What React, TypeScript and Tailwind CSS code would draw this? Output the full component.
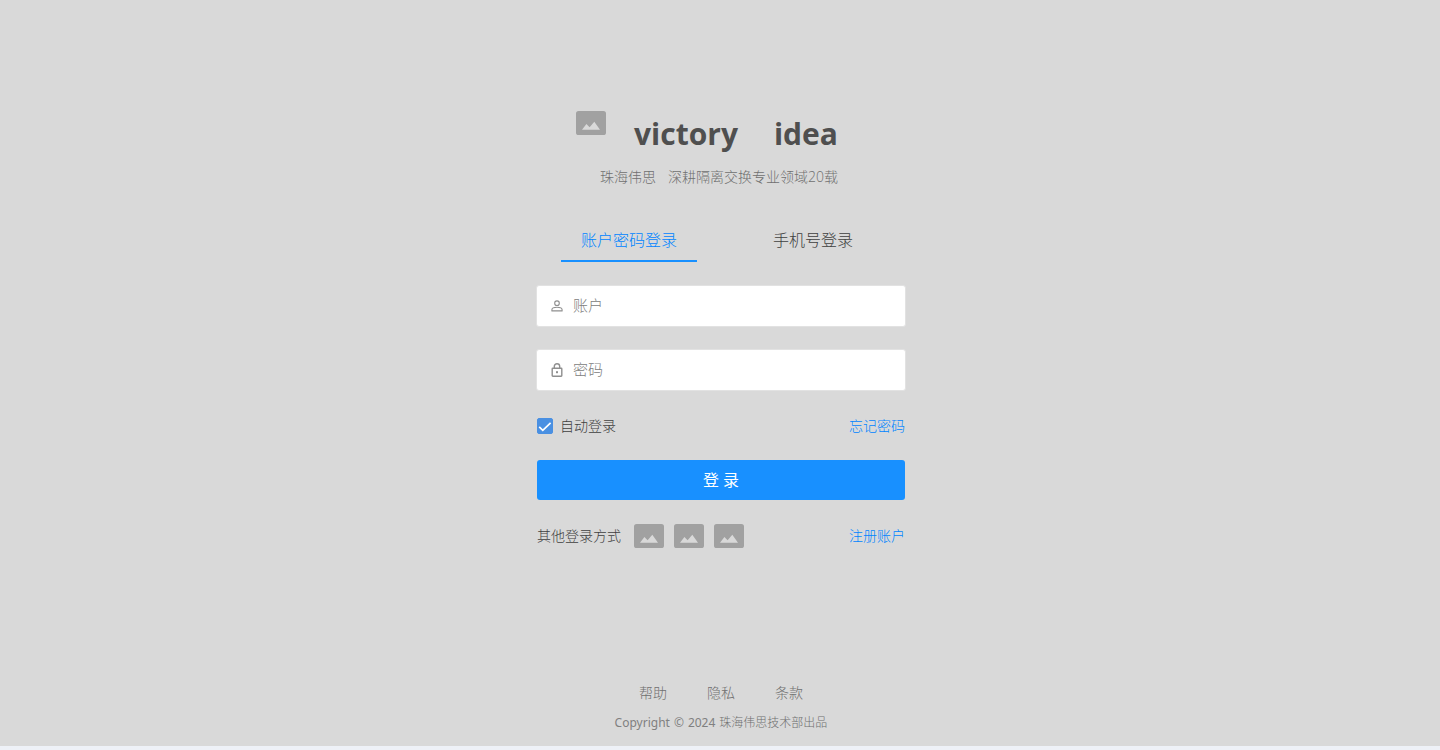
import { useState } from 'react';

function ImageIcon() {
  return (
    <svg width="30" height="24" viewBox="0 0 30 24" aria-hidden="true" className="block shrink-0">
      <rect width="30" height="24" rx="2.6" fill="#a1a1a1" />
      <path d="M6 18.7L10.4 12.9L13.6 16.2L18.3 10.8L24 18.7Z" fill="#d9d9d9" />
    </svg>
  );
}

function UserIcon() {
  return (
    <svg width="12" height="12" viewBox="0 0 12 12" fill="none" stroke="#8f8f8f" strokeWidth="1.1" aria-hidden="true">
      <circle cx="6" cy="3.2" r="2.3" />
      <path d="M0.9 10.9V9.8C0.9 8.3 3.4 7.3 6 7.3S11.1 8.3 11.1 9.8V10.9Z" strokeLinejoin="round" />
    </svg>
  );
}

function LockIcon() {
  return (
    <svg width="12" height="14" viewBox="0 0 12 14" fill="none" stroke="#8f8f8f" strokeWidth="1.4" aria-hidden="true">
      <rect x="1.2" y="5.2" width="9.6" height="8" rx="0.6" />
      <path d="M3.3 5.2V3.4C3.3 1.7 4.4 0.7 6 0.7S8.7 1.7 8.7 3.4V5.2" />
      <rect x="5" y="8.2" width="2" height="2" fill="#8f8f8f" stroke="none" />
    </svg>
  );
}

export default function App() {
  const [tab, setTab] = useState('account');
  const tabs = [
    { id: 'account', label: '账户密码登录' },
    { id: 'phone', label: '手机号登录' },
  ];

  return (
    <div className="flex min-h-screen flex-col bg-[#eef1f7] pb-1 font-['Open_Sans','Noto_Sans_CJK_SC',sans-serif] text-sm font-light text-[#404040]">
      <main className="flex flex-1 flex-col items-center bg-[#d9d9d9] pl-0.5">
        <header className="pt-[111px]">
          <div className="flex h-12 items-start pr-7">
            <ImageIcon />
            <h1 className="ml-7 flex gap-9 text-[30px] leading-[46px] font-bold text-[#4f4f4f]">
              <span>victory</span>
              <span>idea</span>
            </h1>
          </div>
          <p className="mt-2 flex gap-3 pl-6 leading-5 text-[#707070]">
            <span>珠海伟思</span>
            <span>深耕隔离交换专业领域20载</span>
          </p>
        </header>

        <form className="mt-8 w-full max-w-[370px]" onSubmit={(e) => e.preventDefault()}>
          <div className="flex px-px" role="tablist">
            {tabs.map((t) => (
              <div key={t.id} className="flex-1 px-6">
                <button
                  type="button"
                  role="tab"
                  aria-selected={tab === t.id}
                  onClick={() => setTab(t.id)}
                  className={
                    tab === t.id
                      ? 'h-[43px] w-full border-b-2 border-[#1890ff] text-base text-[#0084ff]'
                      : 'h-[43px] w-full border-b-2 border-transparent text-base'
                  }
                >
                  {t.label}
                </button>
              </div>
            ))}
          </div>

          <div className="mt-[23px] flex flex-col gap-[22px]">
            <label className="flex h-[42px] items-center gap-2.5 rounded-[3px] border border-[#e2e2e2] bg-white px-3.5">
              <UserIcon />
              <input type="text" aria-label="账户" placeholder="账户" className="min-w-0 flex-1 text-[15px] outline-none placeholder:text-[#808080]" />
            </label>
            <label className="flex h-[42px] items-center gap-2.5 rounded-[3px] border border-[#e2e2e2] bg-white px-3.5">
              <LockIcon />
              <input type="password" aria-label="密码" placeholder="密码" className="min-w-0 flex-1 text-[15px] outline-none placeholder:text-[#808080]" />
            </label>
          </div>

          <div className="mt-[25px] flex h-5 items-center justify-between px-px">
            <label className="flex items-center gap-[7px]">
              <span className="grid size-4 place-items-center">
                <input type="checkbox" defaultChecked className="peer col-start-1 row-start-1 size-4 appearance-none rounded-xs border border-[#4a90e2] bg-white checked:bg-[#4a90e2]" />
                <svg width="16" height="16" viewBox="0 0 16 16" fill="none" aria-hidden="true" className="pointer-events-none invisible col-start-1 row-start-1 peer-checked:visible">
                  <path d="M2.2 8.8L5.8 12.4L13.6 4.8" stroke="#fff" strokeWidth="1.7" />
                </svg>
              </span>
              自动登录
            </label>
            <a href="#forgot" className="text-[#0084ff]">忘记密码</a>
          </div>

          <div className="mt-6 px-px">
            <button type="submit" className="h-10 w-full rounded-[3px] bg-[#1890ff] text-base font-normal text-white">登 录</button>
          </div>

          <div className="mt-6 flex h-6 items-center justify-between px-px">
            <div className="flex items-center gap-[13px]">
              <span>其他登录方式</span>
              <div className="flex gap-2.5">
                <button type="button" aria-label="登录方式一"><ImageIcon /></button>
                <button type="button" aria-label="登录方式二"><ImageIcon /></button>
                <button type="button" aria-label="登录方式三"><ImageIcon /></button>
              </div>
            </div>
            <a href="#register" className="text-[#0084ff]">注册账户</a>
          </div>
        </form>

        <footer className="mt-auto flex flex-col items-center gap-2.5 pt-10 pb-[13px] text-[#707070]">
          <nav className="flex gap-10 leading-5">
            <a href="#help">帮助</a>
            <a href="#privacy">隐私</a>
            <a href="#terms">条款</a>
          </nav>
          <p className="flex gap-1 text-xs leading-5">
            <span className="flex gap-1 font-['Noto_Sans',sans-serif] font-normal text-[#808080]">
              <span>Copyright</span>
              <span>©</span>
              <span>2024</span>
            </span>
            <span>珠海伟思技术部出品</span>
          </p>
        </footer>
      </main>
    </div>
  );
}
